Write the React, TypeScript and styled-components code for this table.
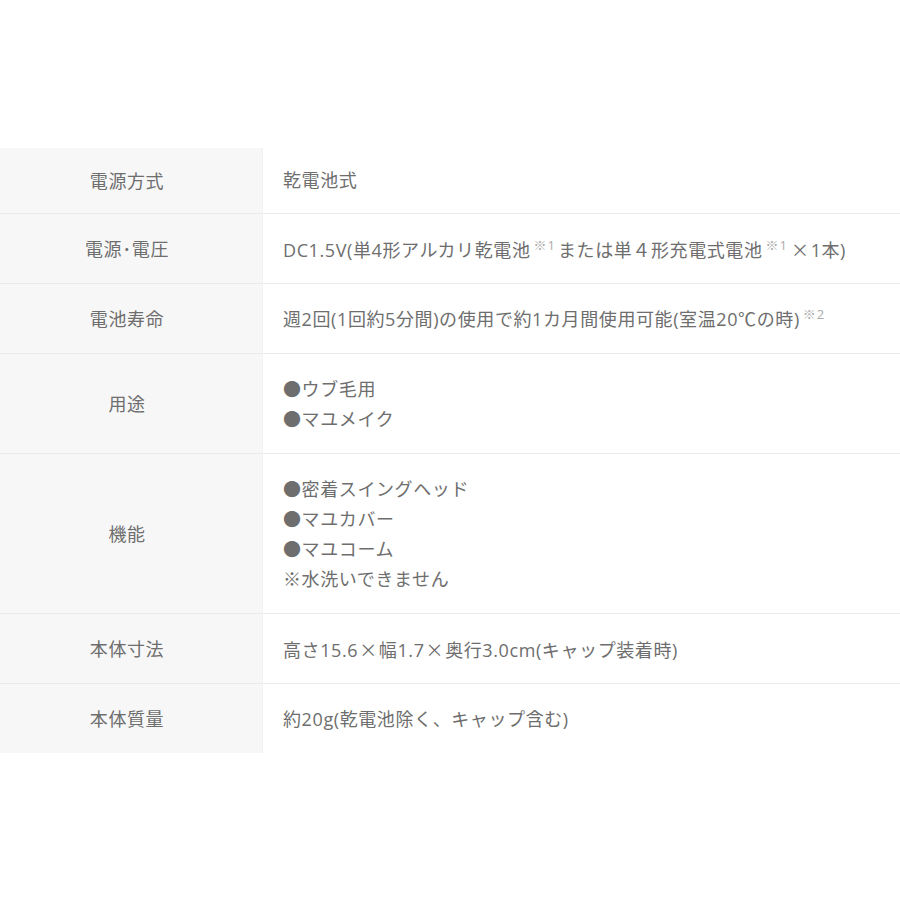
import React from 'react';
import styled, { createGlobalStyle } from 'styled-components';

const GlobalStyle = createGlobalStyle`
  html, body {
    margin: 0;
    padding: 0;
    background: #ffffff;
  }
  body {
    font-family: "Open Sans", "Noto Sans CJK JP", sans-serif;
    color: #6b6b6b;
  }
`;

const Page = styled.div`
  width: 900px;
  height: 900px;
  padding-top: 148px;
  box-sizing: border-box;
`;

const Table = styled.div`
  display: grid;
  grid-template-columns: 262px 1fr;
  width: 900px;
`;

const Label = styled.div<{ first?: boolean }>`
  display: flex;
  align-items: center;
  justify-content: center;
  padding-right: 8px;
  background: #f7f7f7;
  border-top: ${(p) => (p.first ? 'none' : '1px solid #ebebeb')};
  font-size: 18px;
  letter-spacing: 0.6px;
  line-height: 30px;
  color: #6e6e6e;
`;

const Value = styled.div<{ first?: boolean }>`
  padding: ${(p) => (p.first ? '17px 20px 18px' : '20px 20px 19px')};
  border-top: ${(p) => (p.first ? 'none' : '1px solid #ebebeb')};
  border-left: 1px solid #f1f1f1;
  font-size: 18px;
  letter-spacing: 0.6px;
  line-height: 30px;
  color: #6e6e6e;
`;

const Line = styled.div`
  height: 30px;
  white-space: nowrap;
`;

const Note = styled.span`
  font-size: 13px;
  letter-spacing: 1px;
  color: #ababab;
  position: relative;
  top: -7px;
  margin: 0 2px 0 3px;
`;

const Cross = styled.span`
  font-family: "Noto Sans CJK JP", sans-serif;
  margin: 0 1px;
`;

const rows: { label: string; value: React.ReactNode[] }[] = [
  { label: '電源方式', value: ['乾電池式'] },
  {
    label: '電源･電圧',
    value: [
      <>
        DC1.5V(単4形アルカリ乾電池<Note>※1</Note>または単４形充電式電池<Note>※1</Note>
        <Cross>×</Cross>1本)
      </>,
    ],
  },
  {
    label: '電池寿命',
    value: [
      <>
        週2回(1回約5分間)の使用で約1カ月間使用可能(室温20℃の時)<Note>※2</Note>
      </>,
    ],
  },
  { label: '用途', value: ['●ウブ毛用', '●マユメイク'] },
  {
    label: '機能',
    value: ['●密着スイングヘッド', '●マユカバー', '●マユコーム', '※水洗いできません'],
  },
  {
    label: '本体寸法',
    value: [
      <>
        高さ15.6<Cross>×</Cross>幅1.7<Cross>×</Cross>奥行3.0cm(キャップ装着時)
      </>,
    ],
  },
  { label: '本体質量', value: ['約20g(乾電池除く、キャップ含む)'] },
];

const App = () => {
  return (
    <>
      <GlobalStyle />
      <Page>
        <Table>
          {rows.map((row, i) => (
            <React.Fragment key={row.label}>
              <Label first={i === 0}>{row.label}</Label>
              <Value first={i === 0}>
                {row.value.map((v, j) => (
                  <Line key={j}>{v}</Line>
                ))}
              </Value>
            </React.Fragment>
          ))}
        </Table>
      </Page>
    </>
  );
};

export default App;
